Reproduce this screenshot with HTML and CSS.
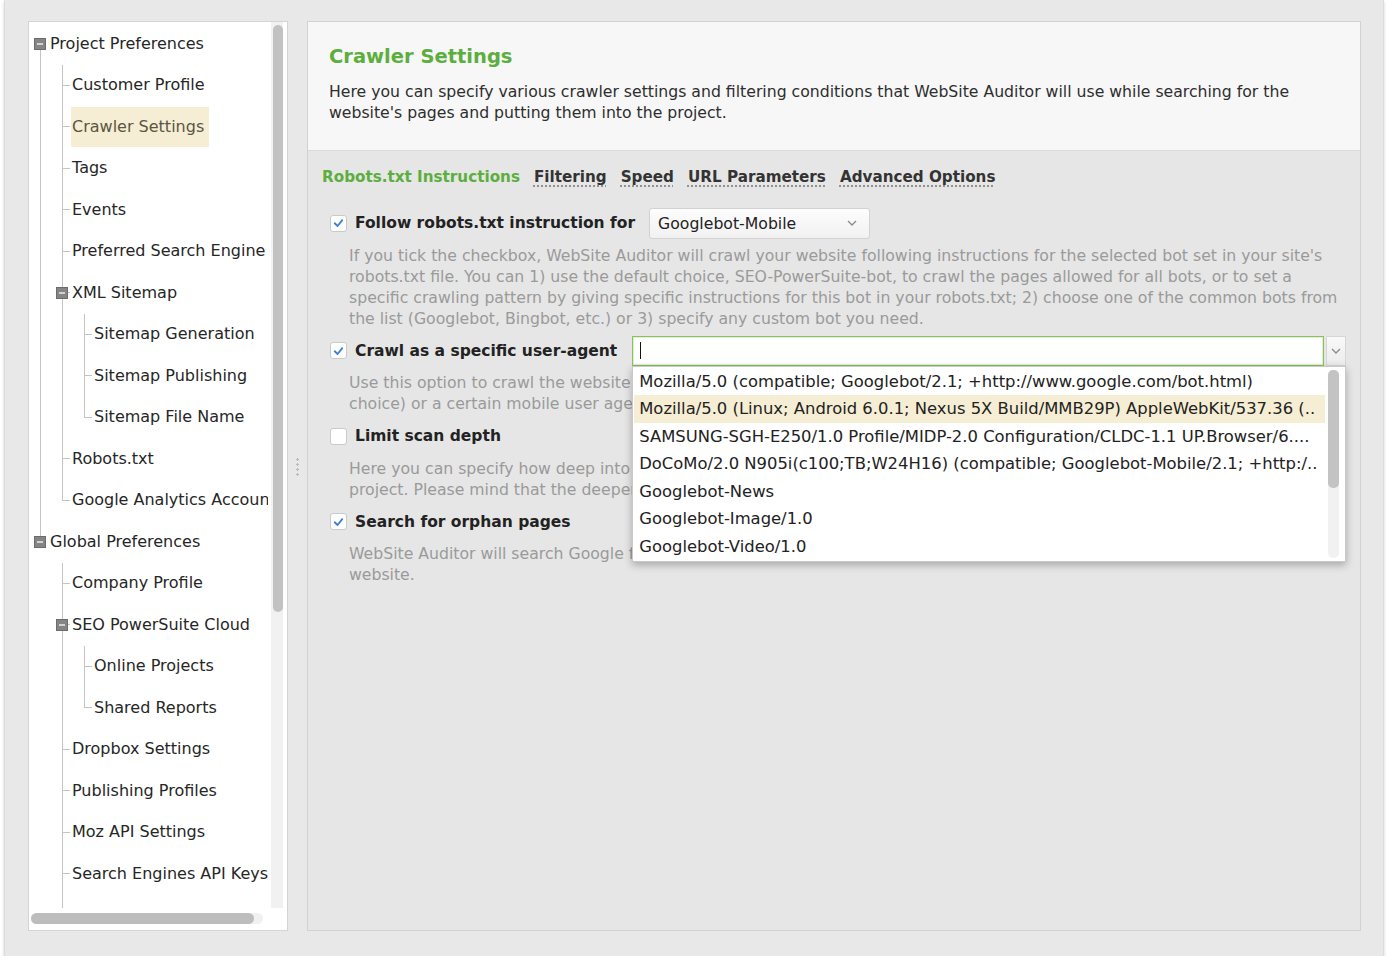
FILE: index.html
```html
<!DOCTYPE html>
<html>
<head>
<meta charset="utf-8">
<title>Crawler Settings</title>
<link rel="stylesheet" href="styles.css">
</head>
<body>
<div class="window">
  <div class="tree-panel">
    <div class="tree-body">
      <div class="tree-view">
        <ul class="tree">
          <li class="root first">
            <div class="row"><span class="toggle"></span><span class="label">Project Preferences</span></div>
            <ul class="kids">
              <li><div class="row"><span class="label">Customer Profile</span></div></li>
              <li><div class="row"><span class="label selected">Crawler Settings</span></div></li>
              <li><div class="row"><span class="label">Tags</span></div></li>
              <li><div class="row"><span class="label">Events</span></div></li>
              <li><div class="row"><span class="label">Preferred Search Engine</span></div></li>
              <li class="branch">
                <div class="row"><span class="toggle"></span><span class="label">XML Sitemap</span></div>
                <ul class="kids sub">
                  <li><div class="row"><span class="label">Sitemap Generation</span></div></li>
                  <li><div class="row"><span class="label">Sitemap Publishing</span></div></li>
                  <li><div class="row"><span class="label">Sitemap File Name</span></div></li>
                </ul>
              </li>
              <li><div class="row"><span class="label">Robots.txt</span></div></li>
              <li><div class="row"><span class="label">Google Analytics Accounts</span></div></li>
            </ul>
          </li>
          <li class="root last">
            <div class="row"><span class="toggle"></span><span class="label">Global Preferences</span></div>
            <ul class="kids">
              <li><div class="row"><span class="label">Company Profile</span></div></li>
              <li class="branch">
                <div class="row"><span class="toggle"></span><span class="label">SEO PowerSuite Cloud</span></div>
                <ul class="kids sub">
                  <li><div class="row"><span class="label">Online Projects</span></div></li>
                  <li><div class="row"><span class="label">Shared Reports</span></div></li>
                </ul>
              </li>
              <li><div class="row"><span class="label">Dropbox Settings</span></div></li>
              <li><div class="row"><span class="label">Publishing Profiles</span></div></li>
              <li><div class="row"><span class="label">Moz API Settings</span></div></li>
              <li><div class="row"><span class="label">Search Engines API Keys</span></div></li>
              <li><div class="row"><span class="label">Google Search Console</span></div></li>
              <li><div class="row"><span class="label">Scheduler</span></div></li>
            </ul>
          </li>
        </ul>
      </div>
      <div class="vscroll"><div class="vthumb"></div></div>
    </div>
    <div class="hscroll"><div class="htrack"><div class="hthumb"></div></div></div>
  </div>

  <div class="splitter"><div class="grip"></div></div>

  <div class="content">
    <div class="header">
      <h1 class="title">Crawler Settings</h1>
      <p class="intro">Here you can specify various crawler settings and filtering conditions that WebSite Auditor will use while searching for the<br>website's pages and putting them into the project.</p>
    </div>

    <div class="tabs">
      <span class="tab active">Robots.txt Instructions</span>
      <span class="tab">Filtering</span>
      <span class="tab">Speed</span>
      <span class="tab">URL Parameters</span>
      <span class="tab">Advanced Options</span>
    </div>

    <div class="options">
      <div class="opt-row">
        <span class="check on"><svg viewBox="0 0 16 16" width="16" height="16"><path d="M4 8.3 L7 11.2 L12 5" fill="none" stroke="#3f7fd5" stroke-width="2" stroke-linecap="round" stroke-linejoin="round"/></svg></span>
        <span class="opt-label">Follow robots.txt instruction for</span>
        <div class="select">
          <span class="select-text">Googlebot-Mobile</span>
          <svg class="chev" viewBox="0 0 10 6" width="10" height="6"><path d="M1 1 L5 5 L9 1" fill="none" stroke="#8a8a8a" stroke-width="1.3"/></svg>
        </div>
      </div>
      <p class="desc">If you tick the checkbox, WebSite Auditor will crawl your website following instructions for the selected bot set in your site's<br>robots.txt file. You can 1) use the default choice, SEO-PowerSuite-bot, to crawl the pages allowed for all bots, or to set a<br>specific crawling pattern by giving specific instructions for this bot in your robots.txt; 2) choose one of the common bots from<br>the list (Googlebot, Bingbot, etc.) or 3) specify any custom bot you need.</p>

      <div class="opt-row">
        <span class="check on"><svg viewBox="0 0 16 16" width="16" height="16"><path d="M4 8.3 L7 11.2 L12 5" fill="none" stroke="#3f7fd5" stroke-width="2" stroke-linecap="round" stroke-linejoin="round"/></svg></span>
        <span class="opt-label">Crawl as a specific user-agent</span>
        <div class="combo">
          <div class="combo-input"><span class="caret"></span></div>
          <div class="combo-btn"><svg viewBox="0 0 10 6" width="10" height="6"><path d="M1 1 L5 5 L9 1" fill="none" stroke="#8a8a8a" stroke-width="1.3"/></svg></div>
          <div class="popup">
            <ul class="popup-list">
              <li>Mozilla/5.0 (compatible; Googlebot/2.1; +http://www.google.com/bot.html)</li>
              <li class="hl">Mozilla/5.0 (Linux; Android 6.0.1; Nexus 5X Build/MMB29P) AppleWebKit/537.36 (..</li>
              <li>SAMSUNG-SGH-E250/1.0 Profile/MIDP-2.0 Configuration/CLDC-1.1 UP.Browser/6....</li>
              <li>DoCoMo/2.0 N905i(c100;TB;W24H16) (compatible; Googlebot-Mobile/2.1; +http:/..</li>
              <li>Googlebot-News</li>
              <li>Googlebot-Image/1.0</li>
              <li>Googlebot-Video/1.0</li>
            </ul>
            <div class="popup-scroll"><div class="popup-track"><div class="popup-thumb"></div></div></div>
          </div>
        </div>
      </div>
      <p class="desc">Use this option to crawl the website as a specific search engine bot (SEO PowerSuite bot is the default<br>choice) or a certain mobile user agent to see your pages the way it sees them.</p>

      <div class="opt-row">
        <span class="check"></span>
        <span class="opt-label">Limit scan depth</span>
      </div>
      <p class="desc">Here you can specify how deep into the website WebSite Auditor should go when collecting pages into the<br>project. Please mind that the deeper the scan, the longer it may take to complete.</p>

      <div class="opt-row">
        <span class="check on"><svg viewBox="0 0 16 16" width="16" height="16"><path d="M4 8.3 L7 11.2 L12 5" fill="none" stroke="#3f7fd5" stroke-width="2" stroke-linecap="round" stroke-linejoin="round"/></svg></span>
        <span class="opt-label">Search for orphan pages</span>
      </div>
      <p class="desc">WebSite Auditor will search Google for pages that are not linked from any other pages but still exist on your<br>website.</p>
    </div>
  </div>
</div>
</body>
</html>
```
FILE: styles.css
```css
html, body {
  margin: 0;
  padding: 0;
  background: #ffffff;
}
body {
  font-family: "DejaVu Sans", "Liberation Sans", sans-serif;
  font-size: 15.7px;
  color: #2a2a2a;
}
.window {
  box-sizing: border-box;
  margin-left: 4px;
  width: 1380px;
  height: 956px;
  background: #e8e8e8;
  border-left: 1px solid #dcdcdc;
  border-right: 1px solid #dcdcdc;
  box-shadow: 0 2px 3px rgba(0, 0, 0, 0.18);
  padding: 21px 22px 25px 23px;
  display: flex;
}

/* ---------- tree panel ---------- */
.tree-panel {
  box-sizing: border-box;
  width: 260px;
  background: #ffffff;
  border: 1px solid #d4d4d4;
  display: flex;
  flex-direction: column;
}
.tree-body {
  flex: 1;
  display: flex;
  min-height: 0;
  overflow: hidden;
}
.tree-view {
  flex: 1;
  overflow: hidden;
  min-width: 0;
  font-size: 16px;
  color: #262626;
}
.vscroll {
  width: 19px;
  box-sizing: border-box;
  padding: 3px 4px 0 5px;
  background: linear-gradient(to right, #ffffff 0, #ffffff 3px, #f1f1f1 3px, #f1f1f1 15px, #ffffff 15px);
}
.vthumb {
  height: 587px;
  background: #c2c2c2;
  border-radius: 5px;
}
.hscroll {
  height: 22px;
  box-sizing: border-box;
  padding: 5px 24px 0 2px;
}
.htrack {
  height: 11px;
  background: #f1f1f1;
  border-radius: 6px;
}
.hthumb {
  width: 223px;
  height: 11px;
  background: #bdbdbd;
  border-radius: 6px;
}

.tree, .kids {
  list-style: none;
  margin: 0;
  padding: 0;
}
.tree {
  padding-top: 1px;
  white-space: nowrap;
}
.tree li {
  position: relative;
}
.row {
  height: 41.5px;
  display: flex;
  align-items: center;
}
.label {
  line-height: 22px;
}
.label.selected {
  background: #f6eed4;
  color: #5b5542;
  padding: 9px 5px 9px 1px;
  margin-left: -1px;
}
.toggle {
  position: relative;
  box-sizing: border-box;
  width: 12px;
  height: 12px;
  flex: none;
  background: #858585;
  border: 1px solid #6c6c6c;
  margin-right: 4px;
  z-index: 1;
}
.toggle::after {
  content: "";
  position: absolute;
  left: 2px;
  right: 2px;
  top: 4px;
  height: 2px;
  background: #d2d2d2;
}
.tree > li > .row .toggle {
  margin-left: 5px;
}
/* root sibling line */
.tree > li.first::before {
  content: "";
  position: absolute;
  left: 11px;
  top: 27px;
  bottom: 0;
  border-left: 1px solid #c4c4c4;
}
.tree > li.last::before {
  content: "";
  position: absolute;
  left: 11px;
  top: 0;
  height: 15px;
  border-left: 1px solid #c4c4c4;
}
.tree > li > .kids {
  margin-left: 33px;
}
.kids > li {
  padding-left: 10px;
}
.kids > li::before {
  content: "";
  position: absolute;
  left: 0;
  top: 0;
  bottom: 0;
  border-left: 1px solid #c4c4c4;
}
.kids > li:last-child::before {
  bottom: auto;
  height: 21px;
}
.kids > li > .row::before {
  content: "";
  position: absolute;
  left: 0;
  top: 20px;
  width: 8px;
  border-top: 1px solid #c4c4c4;
}
.branch > .row .toggle {
  margin-left: -16px;
}
.kids.sub {
  margin-left: 12px;
}

/* ---------- splitter ---------- */
.splitter {
  width: 19px;
  flex: none;
  display: flex;
  align-items: center;
  justify-content: center;
  padding-bottom: 18px;
}
.grip {
  width: 3px;
  height: 20px;
  background: radial-gradient(circle, #b9b9b9 1px, transparent 1.3px) 0 0 / 3px 5px repeat-y;
}

/* ---------- content panel ---------- */
.content {
  flex: 1;
  background: #e6e6e6;
  border: 1px solid #d2d2d2;
  display: flex;
  flex-direction: column;
  min-width: 0;
}
.header {
  background: #f7f7f7;
  border-bottom: 1px solid #dadada;
  padding: 22px 21px 27.5px;
}
.title {
  margin: 0;
  font-size: 19.5px;
  line-height: 26px;
  font-weight: bold;
  color: #5cae3e;
}
.intro {
  margin: 10.5px 0 0;
  line-height: 21px;
  color: #2e2e2e;
  white-space: nowrap;
}
.tabs {
  padding: 15px 0 0 14px;
  display: flex;
  gap: 14px;
  line-height: 22px;
  font-size: 15.2px;
  font-weight: bold;
  color: #333333;
}
.tab {
  text-decoration: underline dotted #777;
  text-underline-offset: 4px;
}
.tab.active {
  color: #5cae3e;
  text-decoration: none;
}

.options {
  padding: 20px 14px 0 22px;
}
.opt-row {
  height: 30px;
  display: flex;
  align-items: center;
}
.check {
  box-sizing: border-box;
  width: 17px;
  height: 17px;
  flex: none;
  background: #ffffff;
  border: 1px solid #cacaca;
  border-radius: 3px;
  display: flex;
  align-items: center;
  justify-content: center;
}
.check svg {
  display: block;
}
.opt-label {
  margin-left: 8px;
  font-size: 15.5px;
  font-weight: bold;
  color: #222222;
}
.select {
  box-sizing: border-box;
  margin-left: 14px;
  width: 221px;
  height: 31px;
  border: 1px solid #d2d2d2;
  border-radius: 3px;
  background: linear-gradient(#fdfdfd, #f1f1f1);
  display: flex;
  align-items: center;
  padding: 0 12px 0 8px;
}
.select-text {
  flex: 1;
  color: #222222;
}
.desc {
  margin: 6.5px 0 7px 19px;
  line-height: 21px;
  color: #9a9a9a;
  white-space: nowrap;
  overflow: hidden;
}

.combo {
  position: relative;
  flex: 1;
  margin-left: 15px;
  height: 30px;
  display: flex;
}
.combo-input {
  box-sizing: border-box;
  flex: 1;
  height: 30px;
  background: #ffffff;
  border: 1px solid #86c25a;
  box-shadow: inset 0 0 0 1px rgba(134, 194, 90, 0.25);
  display: flex;
  align-items: center;
  padding-left: 7px;
}
.caret {
  width: 1px;
  height: 17px;
  background: #111111;
}
.combo-btn {
  box-sizing: border-box;
  width: 20px;
  margin-left: 2px;
  height: 30px;
  background: linear-gradient(#f9f9f9, #ececec);
  border: 1px solid #d6d6d6;
  display: flex;
  align-items: center;
  justify-content: center;
}
.popup {
  position: absolute;
  left: 0;
  right: 0;
  top: 30px;
  box-sizing: border-box;
  background: #ffffff;
  border: 1px solid #c9c9c9;
  box-shadow: 0 3px 8px rgba(0, 0, 0, 0.28);
  display: flex;
  z-index: 5;
}
.popup-list {
  flex: 1;
  list-style: none;
  margin: 0;
  padding: 1px 0 1px 1px;
  min-width: 0;
  font-size: 16.4px;
}
.popup-list li {
  height: 27.5px;
  line-height: 27.5px;
  padding-left: 5px;
  white-space: nowrap;
  overflow: hidden;
  color: #222222;
}
.popup-list li.hl {
  background: #f6eed4;
}
.popup-scroll {
  width: 20px;
  flex: none;
  box-sizing: border-box;
  padding: 3px 6px 3px 3px;
}
.popup-track {
  height: 100%;
  background: #f1f1f1;
  border-radius: 5px;
}
.popup-thumb {
  height: 118px;
  background: #c3c3c3;
  border-radius: 5px;
}
```
